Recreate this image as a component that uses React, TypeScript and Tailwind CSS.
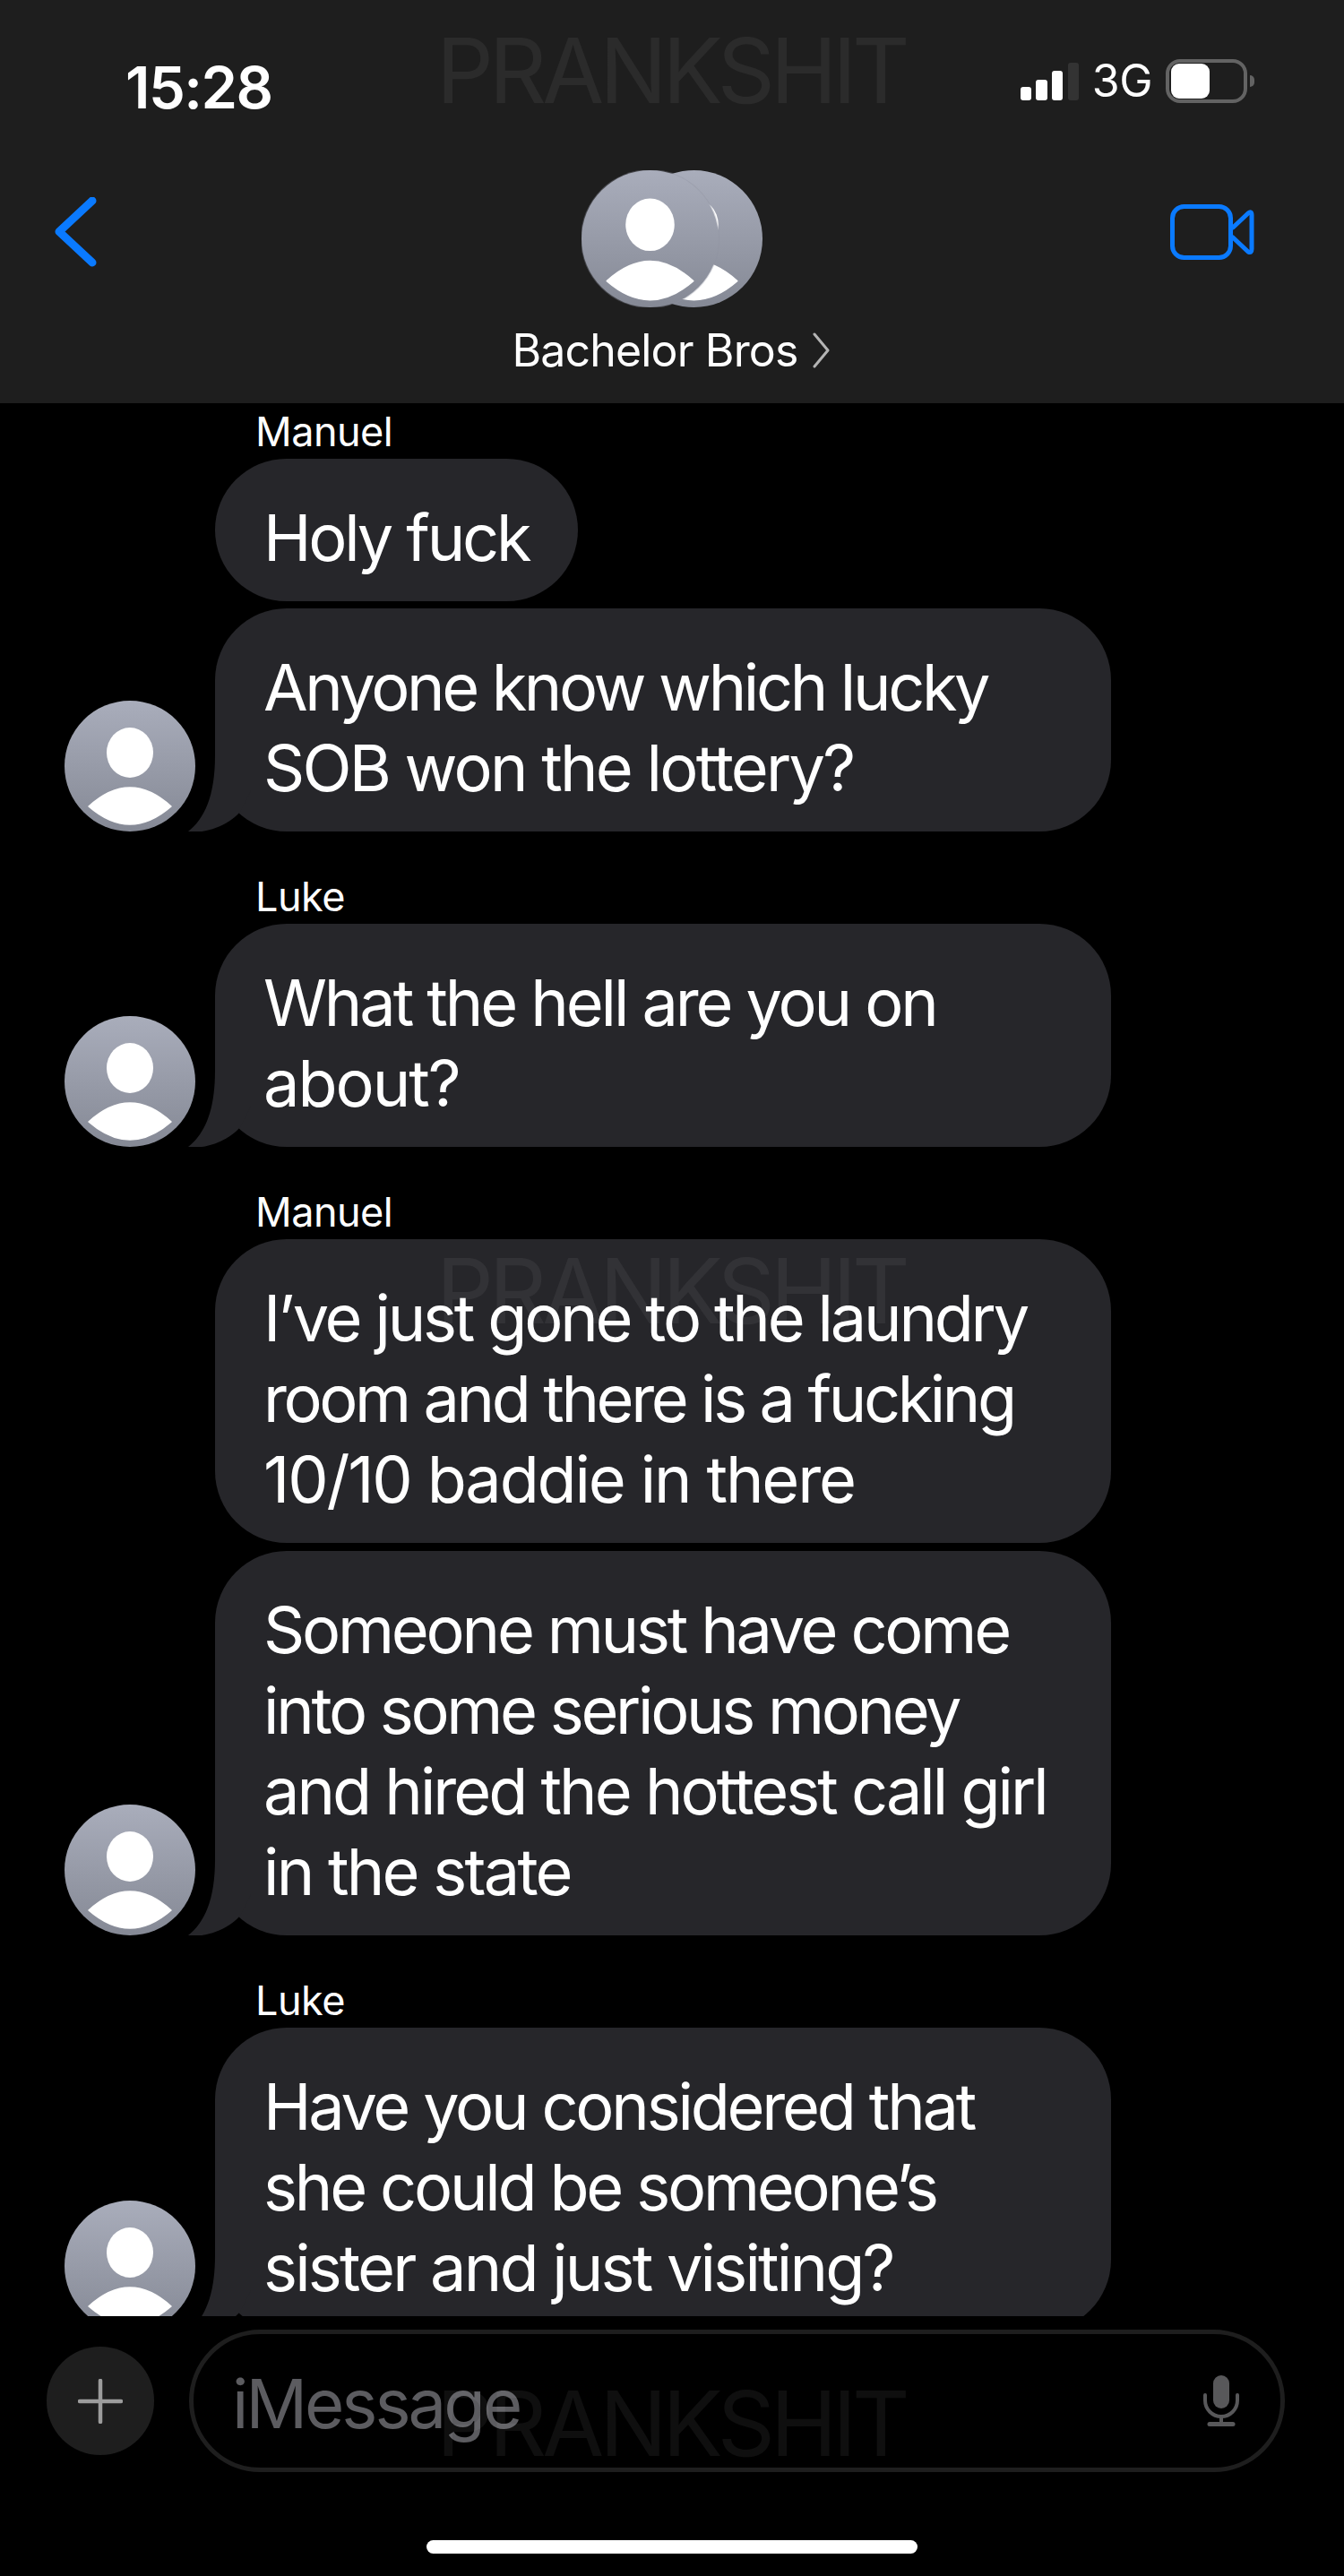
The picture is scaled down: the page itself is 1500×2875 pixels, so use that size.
import React from "react";

const FONT = "font-['Inter','Liberation_Sans',sans-serif]";

function Person({ x, y, r }: { x: number; y: number; r: number }) {
  const k = r / 73;
  return (
    <g transform={`translate(${x - 73 * k} ${y - 73 * k}) scale(${k})`}>
      <circle cx="73" cy="73" r="73" fill="url(#avatarFill)" />
      <ellipse cx="73" cy="58" rx="26" ry="28" fill="#ffffff" />
      <path d="M27 118 Q73 76 119 118 Q73 158 27 118 Z" fill="#ffffff" stroke="#ffffff" strokeWidth="1.5" strokeLinejoin="round" />
    </g>
  );
}

function Gradient() {
  return (
    <defs>
      <linearGradient id="avatarFill" x1="0" y1="0" x2="0" y2="1">
        <stop offset="0" stopColor="#a9adbb" />
        <stop offset="1" stopColor="#858995" />
      </linearGradient>
    </defs>
  );
}

function Avatar() {
  return (
    <svg width="146" height="146" viewBox="0 0 146 146" className="block">
      <Person x={73} y={73} r={73} />
    </svg>
  );
}

function GroupAvatar() {
  return (
    <svg width="202" height="153" viewBox="0 0 202 153" className="block">
      <Person x={125.5} y={76.5} r={76.5} />
      <circle cx="76.5" cy="76.5" r="77.5" fill="#8f93a0" fillOpacity="0.35" />
      <Person x={76.5} y={76.5} r={76.5} />
    </svg>
  );
}

function Tail() {
  return (
    <svg width="70" height="85" viewBox="0 0 70 85" className="absolute left-[-30px] bottom-0">
      <path d="M0 85 C18 71 30 46 30 0 L90 0 L58 63 C45 78 20 88 0 85 Z" fill="#26262a" />
    </svg>
  );
}

type Line = [string, string?];

function Bubble({ lines, tail, fit }: { lines: Line[]; tail?: boolean; fit?: boolean }) {
  return (
    <div
      className={`relative rounded-[80px] bg-[#26262a] pl-[54px] pt-[42.5px] pb-[26.5px] text-[72px] leading-[90px] text-white ${
        fit ? "w-[405px]" : "w-[1000px]"
      }`}
    >
      {tail && <Tail />}
      {lines.map(([text, tracking]) => (
        <div key={text} className={`relative whitespace-nowrap ${tracking ?? "tracking-[-3.2px]"}`}>
          {text}
        </div>
      ))}
    </div>
  );
}

function Row({ avatar, children }: { avatar?: boolean; children: React.ReactNode }) {
  return (
    <div className="flex items-end pl-[72px]">
      <div className="mr-[22px] w-[146px] shrink-0">{avatar && <Avatar />}</div>
      {children}
    </div>
  );
}

function Name({ children, first }: { children: string; first?: boolean }) {
  return (
    <div className={`pl-[285px] pt-[2px] text-[45px] leading-[60px] tracking-[-0.5px] text-white ${first ? "" : "mt-[41px]"}`}>
      {children}
    </div>
  );
}

function Watermark({ top }: { top: string }) {
  return (
    <div
      className={`pointer-events-none absolute left-[487px] ${top} whitespace-nowrap text-[100px] leading-[100px] font-normal tracking-[-5px] text-white/[0.06]`}
    >
      PRANKSHIT
    </div>
  );
}

export default function App() {
  return (
    <div className={`relative flex h-[2875px] w-[1500px] flex-col overflow-hidden bg-black ${FONT}`}>
      {/* Header */}
      <header className="flex h-[450px] shrink-0 flex-col bg-[#1e1e1e]">
        <div className="flex h-[190px] items-start justify-between pl-[140px] pr-[108px]">
          <div className="mt-[63px] text-[65px] leading-[70px] font-semibold tracking-[-1.5px] text-white">15:28</div>
          <div className="mt-[65px] flex items-center">
            <svg width="65" height="42" viewBox="0 0 65 42" className="mt-[2px] mr-[15px] block">
              <rect x="0" y="27" width="12" height="15" rx="3" fill="#fff" />
              <rect x="17" y="19" width="13" height="23" rx="3" fill="#fff" />
              <rect x="35" y="9" width="12" height="33" rx="3" fill="#fff" />
              <rect x="53" y="0" width="12" height="42" rx="3" fill="#333333" />
            </svg>
            <span className="mr-[15px] text-[50px] leading-[50px] tracking-[-0.5px] text-white">3G</span>
            <div className="relative h-[49px] w-[91px] rounded-[16px] border-4 border-[#636363] px-[2px] py-px">
              <div className="h-[39px] w-[43px] rounded-[9px] bg-white" />
              <div className="absolute right-[-12px] top-[14px] h-[13px] w-[5px] rounded-r-full bg-[#636363]" />
            </div>
          </div>
        </div>
        <div className="grid grid-cols-[1fr_auto_1fr] items-start px-[60px]">
          <svg width="50" height="80" viewBox="0 0 50 80" className="mt-[30px] block">
            <path d="M43 4 L6 38.5 L43 73" fill="none" stroke="#0a7aff" strokeWidth="9" strokeLinecap="round" strokeLinejoin="round" />
          </svg>
          <div className="flex flex-col items-center">
            <GroupAvatar />
            <div className="relative mt-[17px] mr-[38px] text-[50px] leading-[62px] tracking-[-0.85px] text-white">
              Bachelor Bros
              <svg width="20" height="40" viewBox="0 0 20 40" className="absolute right-[-36px] top-[11px]">
                <path d="M2 2 L17 20 L2 38" fill="none" stroke="#b4b4b4" strokeWidth="3" strokeLinecap="round" strokeLinejoin="round" />
              </svg>
            </div>
          </div>
          <svg width="94" height="62" viewBox="0 0 94 62" className="mt-[38px] mr-[40px] block justify-self-end">
            <rect x="2.5" y="2.5" width="65" height="57" rx="13" fill="none" stroke="#0a7aff" strokeWidth="5" />
            <path d="M70 26 L87 10 Q91 7 91 12 L91 50 Q91 55 87 53 L70 37" fill="none" stroke="#0a7aff" strokeWidth="5" strokeLinejoin="round" strokeLinecap="round" />
          </svg>
        </div>
      </header>

      {/* Transcript */}
      <main className="h-[2135px] shrink-0 overflow-hidden">
        <svg width="0" height="0" className="absolute">
          <Gradient />
        </svg>
        <Name first>Manuel</Name>
        <Row>
          <Bubble fit lines={[["Holy fuck"]]} />
        </Row>
        <div className="h-[8px]" />
        <Row avatar>
          <Bubble
            tail
            lines={[
              ["Anyone know which lucky", "tracking-[-3.35px]"],
              ["SOB won the lottery?", "tracking-[-2.75px]"],
            ]}
          />
        </Row>
        <Name>Luke</Name>
        <Row avatar>
          <Bubble
            tail
            lines={[
              ["What the hell are you on", "tracking-[-3.1px]"],
              ["about?", "tracking-[-2px]"],
            ]}
          />
        </Row>
        <Name>Manuel</Name>
        <Row>
          <Bubble
            lines={[
              ["I’ve just gone to the laundry"],
              ["room and there is a fucking", "tracking-[-3.4px]"],
              ["10/10 baddie in there", "tracking-[-2.15px]"],
            ]}
          />
        </Row>
        <div className="h-[9px]" />
        <Row avatar>
          <Bubble
            tail
            lines={[
              ["Someone must have come"],
              ["into some serious money", "tracking-[-3.3px]"],
              ["and hired the hottest call girl", "tracking-[-3px]"],
              ["in the state", "tracking-[-2.75px]"],
            ]}
          />
        </Row>
        <Name>Luke</Name>
        <Row avatar>
          <Bubble
            tail
            lines={[
              ["Have you considered that"],
              ["she could be someone’s"],
              ["sister and just visiting?", "tracking-[-2.8px]"],
            ]}
          />
        </Row>
      </main>

      {/* Composer */}
      <div className="flex items-center gap-[39px] pl-[52px] pr-[66px] pt-[15px]">
        <div className="flex h-[121px] w-[120px] shrink-0 items-center justify-center rounded-full bg-[#1e1e1e]">
          <svg width="50" height="50" viewBox="0 0 50 50" className="block">
            <path d="M25 2 V48 M2 25 H48" stroke="#9c9c9c" strokeWidth="4.5" strokeLinecap="round" />
          </svg>
        </div>
        <div className="flex h-[159px] flex-1 items-center justify-between rounded-full border-[5px] border-[#1e1e1e] pl-[43px] pr-[46px]">
          <span className="pt-[5px] text-[76px] leading-[80px] tracking-[-3px] text-[#5c5c60]">iMessage</span>
          <svg width="40" height="58" viewBox="0 0 40 58" className="block">
            <rect x="11" y="0" width="18" height="37" rx="9" fill="#58585a" />
            <path d="M2 22 V28 A18 18 0 0 0 38 28 V22" fill="none" stroke="#58585a" strokeWidth="4" strokeLinecap="round" />
            <path d="M20 46 V54" stroke="#58585a" strokeWidth="4" />
            <path d="M7 54.5 H33" stroke="#58585a" strokeWidth="5" strokeLinecap="round" />
          </svg>
        </div>
      </div>
      <div className="mx-auto mt-[76px] h-[15px] w-[548px] rounded-full bg-white" />

      <Watermark top="top-[29px]" />
      <Watermark top="top-[1391px]" />
      <Watermark top="top-[2655px]" />
    </div>
  );
}
